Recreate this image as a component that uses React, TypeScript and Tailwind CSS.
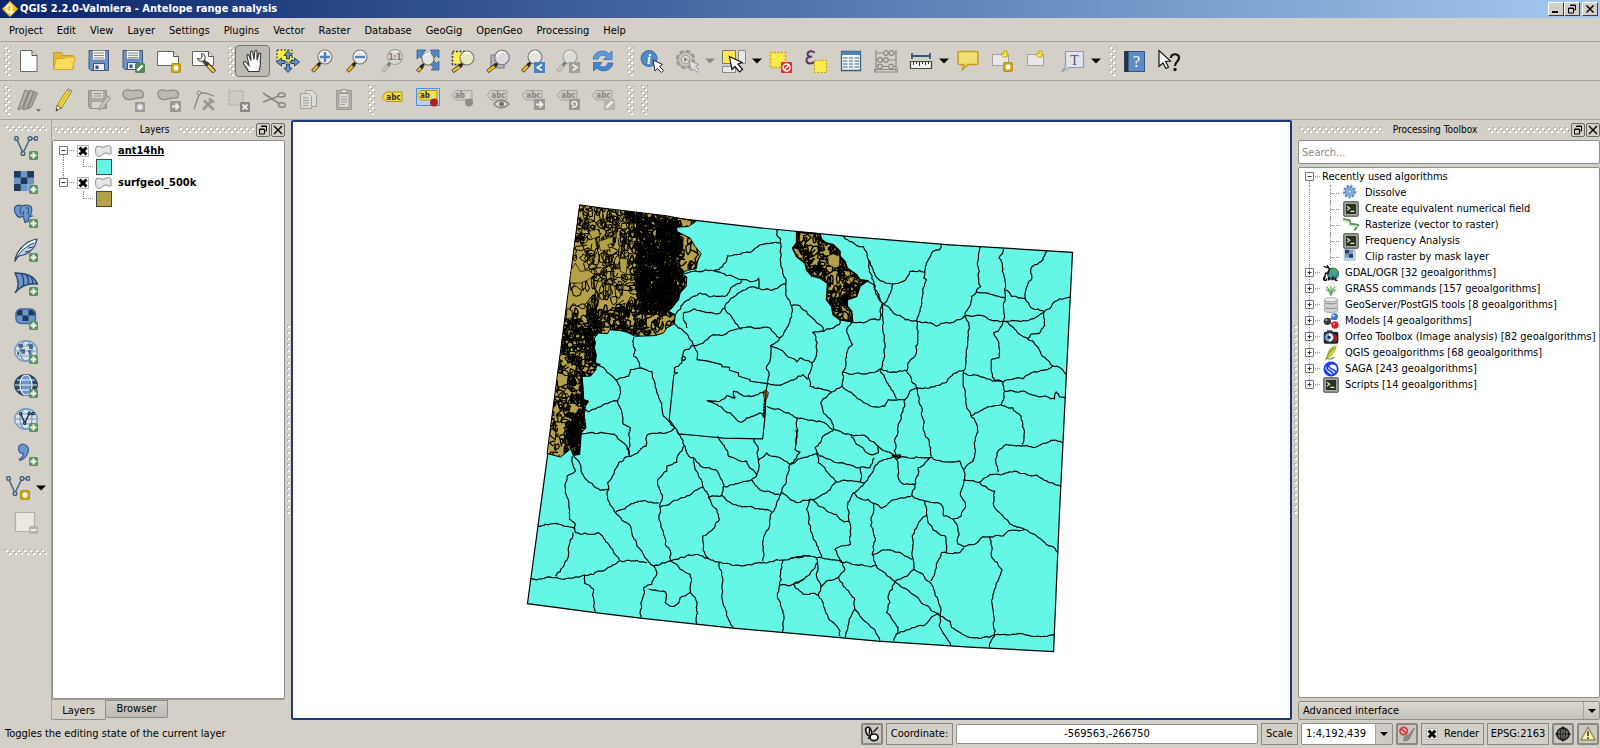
import React from "react";

/* ---------- small helpers ---------- */

type Pt = [number, number];

function makeRandom(seed: number) {
  let s = seed;
  return () => {
    s = (s * 1664525 + 1013904223) % 4294967296;
    return s / 4294967296;
  };
}

function parse(line: string): Pt[] {
  return line
    .trim()
    .split(/\s+/)
    .map((p) => p.split(",").map(Number) as Pt);
}

/* Turns a coarse polyline into a slightly irregular one, like a river or road. */
function roughen(points: Pt[], rnd: () => number): Pt[] {
  const out: Pt[] = [points[0]];
  const split = (a: Pt, b: Pt) => {
    const dx = b[0] - a[0];
    const dy = b[1] - a[1];
    const len = Math.hypot(dx, dy);
    if (len < 9) {
      out.push(b);
      return;
    }
    const k = ((rnd() - 0.5) * Math.min(0.3 * len, 8)) / len;
    const m: Pt = [(a[0] + b[0]) / 2 - dy * k, (a[1] + b[1]) / 2 + dx * k];
    split(a, m);
    split(m, b);
  };
  for (let i = 1; i < points.length; i++) split(points[i - 1], points[i]);
  return out;
}

const toPath = (pts: Pt[]) => "M" + pts.map((p) => `${p[0].toFixed(1)} ${p[1].toFixed(1)}`).join("L");

function linesPath(lines: string[], seed: number) {
  const rnd = makeRandom(seed);
  return lines.map((l) => toPath(roughen(parse(l), rnd))).join("");
}

/* Random contour loops that fill a box. */
function contours(x: number, y: number, w: number, h: number, n: number, size: number, seed: number) {
  const rnd = makeRandom(seed);
  let d = "";
  for (let i = 0; i < n; i++) {
    const cx = x + rnd() * w;
    const cy = y + rnd() * h;
    const steps = 6 + Math.floor(rnd() * 5);
    const rx = size * (0.3 + rnd());
    const ry = size * (0.4 + rnd() * 1.3);
    const pts: Pt[] = [];
    for (let k = 0; k < steps; k++) {
      const a = (k / steps) * Math.PI * 2;
      const r = 0.5 + rnd() * 0.7;
      pts.push([cx + Math.cos(a) * rx * r, cy + Math.sin(a) * ry * r]);
    }
    d += toPath(pts) + (rnd() > 0.5 ? "Z" : "");
  }
  return d;
}

/* ---------- map data: four tiles, three units per pixel ---------- */

const NORTH_WEST = [
  "770,90 770,105 782,118 780,155 786,205 790,225 798,250 802,295 815,320 815,350 800,385 780,415 752,438 750,480 740,500 747,520 742,550",
  "487,222 540,215 580,213 608,200 622,168 650,165 690,158 735,132 780,129",
  "580,213 620,228 660,240 710,242 716,236 716,265",
  "465,345 490,310 520,290 540,280 570,292 615,290 630,270 665,243",
  "716,265 690,262 650,285 620,310 614,325 600,340 560,338 520,328 492,338 490,360 500,385",
  "614,325 640,360 665,390",
  "716,265 755,272 798,252",
  "463,372 490,395 520,437 530,455 530,480",
  "520,437 550,430 580,405 620,402 650,388 680,382 750,385 780,415",
  "520,437 490,455 485,490 475,500 462,505 462,518 472,520 462,525",
  "340,412 345,450 340,470 358,490 360,505 395,515 400,540 410,580 425,625 430,650 465,685",
  "228,490 255,510 285,540 300,535 325,530 330,510 360,505",
  "285,540 300,565 293,600 305,640 310,675 330,685 328,770",
  "192,630 205,637 250,615 293,603",
  "183,703 250,700 290,710 320,740 328,770",
  "465,685 440,700 383,705 378,740 350,762 328,772",
  "465,685 475,703",
  "560,603 600,605 620,588 645,595 640,575 680,590 735,580",
  "560,603 590,615 615,635 640,650 665,668 680,655 700,650 720,640 733,655",
  "484,476 488,470 494,472 496,478 491,483 486,480 484,476",
];
const NORTH_WEST_STRAIGHT = "M461 525L447 660L465 685M475 703L560 711L610 716L728 718L735 650L738 575L742 552M530 480L560 484L605 495V501L628 503V512L655 520L656 530L690 540V545L742 552";

const NORTH_EAST = [
  "95,318 120,318 140,335 165,362 190,385 192,395 158,398 172,430 170,460 155,490 145,535 150,560 215,578",
  "192,395 238,375 240,360",
  "32,438 60,450 85,472 110,487 120,475 155,490",
  "20,552 60,558 100,542 130,525 143,540",
  "278,365 262,385 278,435 262,455 258,490 247,520 247,560 215,578 182,610 190,640 215,665 222,690",
  "278,368 310,370 330,360 360,360 368,310 345,270 342,255 320,245",
  "250,108 285,133 310,140 330,185 345,225 370,245 400,252 430,245 450,215 480,212 497,218",
  "325,180 335,225 345,270 372,312 400,340 450,362 480,366 505,370 530,380 560,368 600,360 612,350",
  "400,252 392,280 372,312",
  "545,133 540,150 515,160 500,190 492,235 500,240 488,290 478,340 475,400 468,440 465,470 445,490 440,515 455,545 470,563",
  "368,312 370,400 367,500 360,512",
  "247,517 320,523 360,508 400,517 440,512",
  "247,560 300,600 350,622 375,620 385,600 435,600 450,575 470,563",
  "360,512 380,545 400,575 410,598",
  "470,563 520,562 560,548 590,520 612,512",
  "612,350 628,370 625,420 620,470 613,512 610,560 620,620 633,648 650,672 645,740 640,785",
  "662,140 655,200 663,260 650,275 635,290 630,320 615,345",
  "650,275 690,283 737,295",
  "732,148 718,175 728,200 738,260 737,295 732,360 715,395 702,400 718,430 718,475 695,480 697,520 705,543 730,547",
  "862,155 850,180 818,200 815,240 800,265 797,298",
  "738,270 755,290 797,298 815,325 855,335 900,297 932,292",
  "612,350 680,353 735,365 800,364 830,352 855,335",
  "855,335 855,378 838,402 815,403 805,418",
  "735,365 805,418 878,498 905,507 920,525",
  "613,520 660,530 705,545 730,547 790,537 878,500",
  "730,547 735,575 800,578 840,592 885,598 890,577 900,592 917,595",
  "735,575 725,615 700,620 660,635 633,648",
  "725,618 760,625 785,650 793,690 787,735",
  "20,620 60,630 110,655 180,665 222,690 270,705 320,712 360,745 405,770",
  "435,600 430,635 413,690 409,740 407,770",
  "470,563 478,610 490,660 495,700 513,745 515,770",
  "110,655 108,735",
];

const SOUTH_WEST = [
  "470,5 490,45 505,80 520,85 525,120 548,172 565,205 590,240 598,270 585,290 548,320 550,355 565,388",
  "490,50 475,75 470,98 440,110 440,125 412,160 425,195 418,230 422,285 435,345 452,370 452,395",
  "420,233 480,207 548,172",
  "520,85 550,115 585,120 608,160 605,198 565,205",
  "608,172 660,160 695,150 710,138 680,95 625,80 605,40 592,20",
  "695,150 730,185 778,195",
  "700,28 715,60 715,100 710,138",
  "715,95 740,70 780,85 810,105 800,140 782,195 755,250 745,300 730,330 728,395",
  "605,198 655,230 700,235 755,247",
  "155,80 165,125 140,140 135,190 145,215 147,270 165,285 165,310",
  "160,80 180,105 190,140 240,183 265,180 262,160 295,100 328,80",
  "265,180 262,210 285,250 330,290 350,350 385,398 400,410",
  "285,250 340,222 375,214 415,222",
  "52,290 100,283 165,298",
  "165,310 180,315 235,310 265,345 280,370 297,392",
  "158,310 145,370 130,410 105,440",
  "32,448 95,445 150,447 220,435 297,395 380,400",
  "193,437 193,462 220,480 225,548",
  "400,410 410,430 395,465 370,475 362,520 362,565",
  "385,480 435,488 435,520 455,532 475,522 480,505 510,490 510,435 480,420 452,395",
  "510,490 525,505 530,583",
  "400,410 452,395 490,385 530,375 565,388 620,402 680,407 730,400 810,388 870,380",
  "597,400 608,450 605,500 620,550 640,594",
  "788,395 778,470 772,500 792,570 788,608",
  "778,470 820,465 850,450",
];

const SOUTH_EAST = [
  "17,0 15,60 30,68 0,105",
  "0,105 40,85 80,72 85,100 130,145 140,158",
  "132,3 100,20 75,55 90,80 140,100 208,115 240,115 253,85",
  "182,15 200,45 240,75 265,70 265,50",
  "318,80 270,95 250,125 225,160 190,190",
  "210,115 215,135 210,158",
  "140,158 175,155 225,160",
  "60,210 110,190 140,158",
  "-30,190 0,210 20,220 60,210 50,240 65,310 95,383",
  "60,210 110,245 140,255 150,270 180,278",
  "190,190 172,230 182,290 182,345 135,360 158,400",
  "190,190 205,205 235,210 255,222 275,237 320,210 365,200",
  "253,222 243,290 257,330 247,375 262,410",
  "318,88 330,155 345,165 375,165",
  "318,80 380,82 425,83 385,115 378,160 365,195",
  "425,83 440,93 510,95 522,120",
  "550,90 550,95 522,120 520,170 512,190 528,232 515,260 490,270 505,300 505,345 525,352 555,345 580,322 640,320 665,303 705,300 760,335 805,370",
  "365,195 405,215 455,225 462,260 490,270",
  "405,215 410,250 415,280 430,302 468,322 468,368",
  "410,258 385,285 367,320 367,380 372,420",
  "247,375 290,362 330,370 367,390",
  "522,355 510,370 455,370 440,410 422,455",
  "520,152 570,158 615,185 615,235 640,260 660,283 705,300",
  "570,158 600,135 685,128 740,137 780,160 815,170",
  "625,128 617,90 625,65 650,45 750,48 785,32 820,40",
  "0,388 60,380 158,400 200,407 258,408 315,458 350,480 400,525 445,553",
  "80,385 80,430 92,475 85,495 105,540 130,580 150,605 150,622",
  "80,400 60,435 10,465 40,495 85,498",
  "92,475 110,455 145,445 165,420 158,400",
  "145,445 195,510 195,540 240,590 270,635",
  "195,540 178,570 165,625",
  "372,420 340,445 315,458 295,500 300,520 290,550 325,595 312,635",
  "316,618 350,602 400,590 445,553",
  "372,420 400,435 425,465 450,530 448,590 483,650",
  "445,553 480,575 485,595 540,625 600,625 680,615 770,622 795,615",
  "600,322 605,380 637,422 610,500 615,620 600,655",
];

const GEOLOGY_WEST =
  "M178 15L250 25L350 37L440 48L527 65L505 80L470 82L470 95L490 105L510 115L525 140L543 162L532 185L528 207L500 212L485 222L500 232L498 260L480 280L475 300L455 325L445 335L465 345L463 372L440 385L430 400L405 408L345 410L320 398L300 393L268 390L262 402L235 400L222 415L225 430L222 445L228 465L225 490L240 495L228 500L226 512L210 530L185 530L188 560L190 600L205 605L195 620L192 650L197 685L183 700L178 765L158 768L152 748L120 773L80 762Z";
const GEOLOGY_EAST =
  "M110 97L180 103L185 120L200 130L220 135L240 155L240 170L255 185L262 205L290 225L300 240L322 243L300 260L290 290L262 300L262 320L275 335L278 367L255 362L240 360L220 345L215 320L200 300L203 250L180 235L155 228L140 210L135 190L110 170L98 145L110 130Z";

function MapDrawing() {
  const ink = { fill: "none", stroke: "#000", strokeLinejoin: "round" as const };
  return (
    <svg className="block h-full w-full" viewBox="293 122 997 597" role="img" aria-label="Map of hunt areas over surface geology">
      <defs>
        <clipPath id="geoWest"><path d={GEOLOGY_WEST} /></clipPath>
        <clipPath id="geoEast"><path d={GEOLOGY_EAST} /></clipPath>
      </defs>
      <path
        d="M579.5 206L665 217L760 228L853 237L950 245L1073 252.500L1067 372L1060 512L1054 652.500L970 648L878 642L790 634L733 629L640 619L595 613.500L527 604.500L547 457L563 335Z"
        fill="#66f6e6" stroke="#000" strokeWidth="1.200"
      />
      <g transform="translate(520 200) scale(.33333)">
        <path d={GEOLOGY_WEST} fill="#b5a14a" stroke="#000" strokeWidth="3" />
        <g clipPath="url(#geoWest)" {...ink}>
          <path strokeWidth="3" d={contours(140, 10, 200, 330, 135, 17, 11)} />
          <path strokeWidth="3.500" d={contours(75, 600, 75, 180, 42, 12, 23)} />
          <path strokeWidth="3.500" d={contours(90, 330, 150, 290, 170, 12, 29)} />
          <path strokeWidth="3.500" d={contours(160, 20, 180, 110, 55, 11, 31)} />
          <path strokeWidth="4" d={contours(325, 35, 230, 380, 300, 13, 47)} />
          <path strokeWidth="5" d={contours(355, 60, 125, 280, 260, 13, 58)} />
          <path strokeWidth="4" d={contours(130, 360, 100, 120, 55, 11, 63)} />
          <path strokeWidth="5" d={contours(145, 540, 50, 240, 85, 11, 71)} />
          <path strokeWidth="4" d={contours(200, 320, 150, 80, 60, 11, 77)} />
          <path fill="#b5a14a" strokeWidth="2" d="M152 210L165 190L180 215L205 212L222 225L205 240L180 250L148 250ZM235 125L278 110V130L262 135L270 150L240 152ZM298 175L322 178L318 222L300 215ZM205 95L232 88L240 108L215 118ZM140 325L155 335L155 355L138 358Z" />
        </g>
        <path d="M727 577L738 572L745 580L742 592L734 605L730 580Z" fill="#b5903c" stroke="#000" strokeWidth="2.500" />
        <path d="M735 600L731 655" stroke="#000" strokeWidth="7" strokeDasharray="9 2 6 1" />
        <path {...ink} strokeWidth="3.500" d={linesPath(NORTH_WEST, 5)} />
        <path {...ink} strokeWidth="3.500" d={NORTH_WEST_STRAIGHT} />
      </g>
      <g transform="translate(760 200) scale(.33333)">
        <path d={GEOLOGY_EAST} fill="#b5a14a" stroke="#000" strokeWidth="5" />
        <g clipPath="url(#geoEast)" {...ink}>
          <path strokeWidth="4" d={contours(95, 95, 230, 275, 330, 11, 83)} />
          <path fill="#b5a14a" strokeWidth="2" d="M204 168L220 162L240 170L238 200L225 205L205 195ZM265 235L285 230L275 250Z" />
        </g>
        <path {...ink} strokeWidth="3.500" d={linesPath(NORTH_EAST, 8)} />
        <path d="M396 768L422 766L424 772L410 780Z" fill="#6b4a1c" stroke="#000" strokeWidth="3" />
      </g>
      <g transform="translate(520 430) scale(.33333)">
        <path {...ink} strokeWidth="3.500" d={linesPath(SOUTH_WEST, 13)} />
      </g>
      <g transform="translate(790 430) scale(.33333)">
        <path {...ink} strokeWidth="3.500" d={linesPath(SOUTH_EAST, 21)} />
      </g>
    </svg>
  );
}

/* ---------- icons, drawn on a 24 × 24 grid ---------- */

function Svg({ children, size = "size-6" }: { children: React.ReactNode; size?: string }) {
  return (
    <svg viewBox="0 0 24 24" className={`${size} block shrink-0`} fill="none" aria-hidden="true">
      {children}
    </svg>
  );
}

const Star = ({ x, y }: { x: number; y: number }) => (
  <g transform={`translate(${x} ${y})`}>
    <rect x=".5" y=".5" width="9" height="9" rx="1.500" fill="#c9a20c" stroke="#b8930a" />
    <path d="M5 1.800v6.400M1.800 5h6.400M2.800 2.800l4.400 4.400M7.200 2.800L2.800 7.200" stroke="#fff" strokeWidth="1.200" />
  </g>
);
const Plus = () => (
  <g>
    <rect x="15" y="15" width="9" height="9" rx="1.500" fill="#5b9459" />
    <path d="M19.500 16.500v6M16.500 19.500h6" stroke="#fff" strokeWidth="2" />
  </g>
);
const Lens = ({ cx = 14, cy = 8, r = 7, grey = false, fill = "#e4e4e0" }: { cx?: number; cy?: number; r?: number; grey?: boolean; fill?: string }) => (
  <g opacity={grey ? 0.55 : 1}>
    <path d={`M1.500 22.500L${cx - 5.5} ${cy + 7}`} stroke={grey ? "#7c7a76" : "#4a3d14"} strokeWidth="4" />
    <path d={`M2 22L${cx - 7.5} ${cy + 9}`} stroke={grey ? "#c4c2bc" : "#f2c230"} strokeWidth="2.400" />
    <path d={`M${cx - 7} ${cy + 8}L${cx - 4} ${cy + 5}`} stroke="#222" strokeWidth="2.500" />
    <circle cx={cx} cy={cy} r={r} fill={fill} stroke="#777" strokeWidth="1.100" />
    <path d={`M${cx - 5} ${cy - 1}a5 5 0 0 1 8-3.500`} stroke="#fff" strokeWidth="1.500" />
  </g>
);
const Cursor = ({ x, y, grey = false }: { x: number; y: number; grey?: boolean }) => (
  <path
    transform={`translate(${x} ${y})`}
    d="M0 0l2 11 2.400-2.400L8.500 12.500l2-2-4-4L9.500 4.500z"
    fill={grey ? "#ddd" : "#fff"} stroke={grey ? "#8f8d88" : "#222"} strokeWidth="1"
  />
);

const icons: Record<string, React.ReactNode> = {
  new: <><path d="M3.500 1.500h11.500l5 5v16H3.500z" fill="#fff" stroke="#666" /><path d="M15 1.500v5h5" fill="#ddd" stroke="#555" /></>,
  open: <><path d="M1.500 20.500V3.500h8l1.500 3h10v14z" fill="#e2b93a" stroke="#c79a1c" /><path d="M1.500 20.500L4.500 9.500h8l1-1.500h9.500l-2.500 12.500z" fill="#fddc5c" stroke="#d1a52a" /></>,
  save: <><path d="M2 1.500h19.500v20H4L2 19.500z" fill="#6a94c8" stroke="#38587f" /><path d="M5.500 1.500h13V11h-13z" fill="#f4f4f2" stroke="#666" strokeWidth=".6" /><path d="M7 4h10M7 6.500h10M7 9h10" stroke="#888" /><path d="M6.500 14.500h11v7h-11z" fill="#ececea" stroke="#38587f" /><path d="M8.500 16.500h3v3.500h-3z" fill="#38587f" /></>,
  saveas: <><path d="M1 1.500h19.500v19H3L1 18.500z" fill="#6a94c8" stroke="#38587f" /><path d="M4.500 1.500h13V10h-13z" fill="#f4f4f2" stroke="#666" strokeWidth=".6" /><path d="M6 4h10M6 6.300h10M6 8.600h10" stroke="#888" /><path d="M5.500 13.500h11v7h-11z" fill="#ececea" stroke="#38587f" /><path d="M7.500 15.500h3v3.500h-3z" fill="#38587f" /><rect x="13" y="14" width="10" height="10" rx="1.500" fill="#4f8a55" /><path d="M15.500 21.500l5-5" stroke="#fff" strokeWidth="2.400" /></>,
  composer: <><path d="M.5 2.500h16l5 5v9H.5z" fill="#fff" stroke="#666" /><path d="M16.500 2.500v5h5" fill="#ddd" stroke="#555" /><Star x={14} y={14} /></>,
  manager: <><path d="M.5 2.500h16l5 5v9H.5z" fill="#fff" stroke="#666" /><path d="M16.500 2.500v5h5" fill="#ddd" stroke="#555" /><path d="M10 10l4 4.500" stroke="#444" strokeWidth="3.500" /><path d="M14 14l8.500 9" stroke="#4a3d14" strokeWidth="4.500" /><path d="M16 16.500l6 6" stroke="#f5cc50" strokeWidth="2.500" /><path d="M9.500 4.500a4 4 0 1 1-4 5l3 .5 1.500-2z" fill="#eee" stroke="#444" /></>,
  hand: <path d="M6 22c-1-3-4.500-6-5-8.500-.3-1.500 1.500-2 2.500-.8L6.500 16 4.500 6.500C4.300 5 6 4.500 6.500 6L8.500 11 8 3c0-1.800 2-1.800 2.300 0L11.500 10l.8-8c.2-1.700 2.200-1.500 2.200.2L14.500 10.500 16.300 4.500c.5-1.500 2.300-1 2 .7C17 11 18.500 14 17.500 17.500L16.500 22z" fill="#fff" stroke="#333" strokeWidth="1.100" transform="translate(1.500 .5)" />,
  pan: <><path d="M1 1h15v12H1z" fill="#fdeb3d" stroke="#222" strokeDasharray="2 1.500" /><path d="M12 1.500l4 5h-2.500v3.500h-3V6.500H8zM12 23.500l-4-4.500h2.500V15h3v4H16zM.5 13l5-4v2.500H9v3H5.500V17zM23.500 13l-5-4v2.500H15v3h3.500V17z" fill="#5e93d4" stroke="#24466e" /></>,
  zoomin: <><Lens fill="#eceae4" /><path d="M14 3v10M9 8h10" stroke="#4a82bf" strokeWidth="2.300" /></>,
  zoomout: <><Lens fill="#eceae4" /><path d="M9 8h10" stroke="#4a82bf" strokeWidth="2.300" /></>,
  zoom1: <><Lens grey fill="#ddd" r={7.5} /><text x="14" y="11" fontSize="8" fontWeight="bold" textAnchor="middle" fill="#77756f" fontFamily="DejaVu Sans Condensed, sans-serif">1:1</text></>,
  zoomfull: <><path d="M3 1h7l-2.500 2.500 4 4-4 4-4-4L1 10V1zM23 1v8l-2.500-2.500L17 10l-4-4 3-3L14 1zM23 21h-8l2.500-2.500-4-4 3.500-4 3.500 4L23 12z" fill="#4f87c5" stroke="#355f90" strokeWidth=".8" /><Lens cx={12} cy={10} r={6} /></>,
  zoomsel: <><path d="M1.500 2.500h13v13h-13z" fill="#fdee55" stroke="#333" strokeWidth="1.500" strokeDasharray="2 1.500" /><Lens cx={16} cy={9} r={7} fill="#e9e7c0" /></>,
  zoomlayer: <><path d="M5 6h13v13H5z" fill="#b8afc3" stroke="#84788f" strokeWidth="1.200" /><Lens cx={16} cy={8.5} r={7.3} fill="#dcd8de" /></>,
  zoomlast: <><Lens cx={14} cy={8} r={7} /><rect x="13" y="13" width="11" height="11" fill="#4a82bf" /><path d="M21 15.500l-4.500 3 4.500 3" stroke="#fff" strokeWidth="1.800" /></>,
  zoomnext: <><Lens grey cx={14} cy={8} r={7} /><rect x="13" y="13" width="11" height="11" fill="#a19f9a" /><path d="M16.500 15.500l4.500 3-4.500 3" stroke="#eee" strokeWidth="1.800" /></>,
  refresh: <><path d="M2 10C3 4 9 1 14 2.500c2 .6 3 1.500 4 2.500l3-3v8.500h-8.500l3-2.800c-3-3-7-1.700-8.500 2.300z" fill="#5d9bdd" stroke="#2f6cae" strokeWidth=".8" /><path d="M22 14c-1 6-7 9-12 7.500-2-.6-3-1.500-4-2.500l-3.500 3v-8.500H11l-2.500 2.800c3 3 7 1.700 8.500-2.300z" fill="#4384cb" stroke="#2f6cae" strokeWidth=".8" /></>,
  identify: <><circle cx="9" cy="9.500" r="8" fill="#4f8ac8" stroke="#356ba5" /><text x="9" y="14.500" fontSize="14" fontStyle="italic" fontWeight="bold" textAnchor="middle" fill="#fff" fontFamily="Liberation Serif, serif">i</text><Cursor x={13} y={11} /></>,
  action: <><circle cx="10.500" cy="10.500" r="8.500" stroke="#99978f" strokeWidth="2.500" strokeDasharray="4.500 2.200" /><circle cx="10.500" cy="10.500" r="7.300" fill="#cbc8c0" stroke="#a19f99" strokeWidth="1.300" /><circle cx="10.500" cy="10.500" r="4.200" fill="#dedcd6" stroke="#99978f" /><path d="M9 8l4 2.500L9 13z" fill="#8a8882" /><Cursor x={14} y={11} grey /></>,
  select: <><path d="M.5 1.500h13v13H.5z" fill="#fde94b" stroke="#777" /><path d="M16.500 1.500h7v13h-7zM.5 17.500h13v6H.5z" fill="#e8e8ea" stroke="#888" /><path d="M7.500 7.500l2.500 13 3-3 4.500 5.500 3-2.500-4.500-5.500 4-1.500z" fill="#fff" stroke="#111" strokeWidth="1.200" /></>,
  deselect: <><path d="M1.500 3.500h15v15h-15z" fill="#fde94b" stroke="#c9a20c" strokeWidth="1.400" strokeDasharray="2 1.500" /><rect x="12" y="13" width="11" height="11" rx="1" fill="#dd2f2f" /><circle cx="17.500" cy="18.500" r="3.500" stroke="#fff" strokeWidth="1.500" /><path d="M15.200 21l4.700-5" stroke="#fff" strokeWidth="1.500" /></>,
  expression: <><path d="M10.500 4C9.500 1.300 4 1.500 3.500 4.800 3.300 7 5.500 8 8 7.800 4.500 7.500 2 9 2.500 11.800c.5 3.500 6 3.500 8.500.7" stroke="#5f3567" strokeWidth="2" /><path d="M10.500 11.500h12v12h-12z" fill="#fde94b" stroke="#c9a20c" strokeWidth="1.200" strokeDasharray="2 1.500" /></>,
  table: <><path d="M2.500 2.500h19v19h-19z" fill="#f6f8fa" stroke="#34617f" strokeWidth="1.300" /><path d="M2.500 2.500h19v3.500h-19z" fill="#4d86b6" /><path d="M4 9h4.500M10 9h4M15.500 9H20M4 12h4.500M10 12h4M15.500 12H20M4 15h4.500M10 15h4M15.500 15H20M4 18h4.500M10 18h4M15.500 18H20" stroke="#34617f" strokeWidth="1.200" /></>,
  abacus: <g stroke="#8b8982" strokeWidth="1.200"><path d="M2 1v21M22 1v21M.5 20.500h23v2.500H.5zM2 4h20M2 11h20M2 17.500h20" /><g fill="#d4d0c8"><circle cx="12" cy="4" r="2.300" /><circle cx="17.500" cy="4" r="2.300" /><circle cx="6" cy="11" r="2.300" /><circle cx="12" cy="11" r="2.300" /><circle cx="6" cy="17.500" r="2.300" /><circle cx="17" cy="17.500" r="2.300" /></g></g>,
  measure: <><path d="M3 7h18M3 4v6M21 4v6" stroke="#33597a" strokeWidth="1.800" /><path d="M1.500 12.500h21v7h-21z" fill="#f0f0ee" stroke="#444" strokeWidth="1.200" /><path d="M4.500 13v3M7.500 13v2M10.500 13v4M13.500 13v2M16.500 13v3M19.500 13v2" stroke="#333" /></>,
  tip: <path d="M4 2.500h16a2 2 0 0 1 2 2v9a2 2 0 0 1-2 2h-8l-5.500 5 1.500-5H4a2 2 0 0 1-2-2v-9a2 2 0 0 1 2-2z" fill="#f0df78" stroke="#c49a0e" strokeWidth="1.400" />,
  newbookmark: <><path d="M1.500 5.500h16v11h-16z" fill="#e8e8e6" stroke="#666" strokeDasharray="1 1" /><path d="M10.500 4.500v2l2 1.500h3.500V2h-3v2.500z" fill="#fde94b" stroke="#c9a20c" /><Star x={12} y={13} /></>,
  bookmark: <><path d="M1.500 5.500h16v11h-16z" fill="#e8e8e6" stroke="#666" strokeDasharray="1 1" /><path d="M10.500 4.500v2l2 1.500h3.500V2h-3v2.500z" fill="#fde94b" stroke="#c9a20c" /></>,
  text: <><path d="M4.500 2.500h18v16H8L1 22.500l3.500-5z" fill="#dfe5ee" stroke="#8f99a8" strokeWidth="1.200" /><text x="13.500" y="15.500" fontSize="14" textAnchor="middle" fill="#555" fontFamily="Liberation Serif, serif">T</text></>,
  help: <><path d="M2.500 2.500h20v20h-20z" fill="#5b8cc6" stroke="#33557d" /><path d="M2.500 2h4v21h-4z" fill="#26333f" /><text x="14.500" y="18" fontSize="16" textAnchor="middle" fill="#fff" fontFamily="Liberation Serif, serif">?</text></>,
  whats: <><path d="M2 1.500v16l4-3.500 3 5.500 2.500-1.500L8.500 12.500l5-.5z" fill="#fff" stroke="#111" strokeWidth="1.200" /><path d="M14 9c0-5 8-5 8 0 0 3.500-4 3.500-4 8" stroke="#111" strokeWidth="2.200" /><circle cx="18" cy="20.500" r="1.700" fill="#111" /></>,
  pencils: <><path d="M1 21L8 2l4 1.500L5.500 20 1 22zM6 21L13 2l4 1.500-6 16.500-4.500 2zM10 20L17 3.500l3.500 1.500-6 14-4 2z" fill="#a5a39d" stroke="#86847e" /><path d="M3.500 19L9.500 3.500M8.500 19.500L15 3.500" stroke="#c0beb8" /><path d="M19 21h5l-2.500 3z" fill="#77756f" /></>,
  pencil: <><path d="M5 17.500L15 2l4 2.500L9.500 20z" fill="#f1de45" stroke="#a08a18" /><path d="M5 17.500L4 23l5.500-3z" fill="#efe6c8" stroke="#555" strokeWidth=".8" /><path d="M4.500 20.500L4 23l2-1z" fill="#222" /><path d="M15 2l1-1.200 4 2.400L19 4.500" fill="#ccc" stroke="#777" /><path d="M7 18.500L17 3.500" stroke="#c8ab20" /></>,
  savelayer: <g opacity=".8"><path d="M1.500 2.500h18v18H3l-1.500-2z" fill="#a19f99" stroke="#86847e" /><path d="M5 3h11v7H5zM5 14h10v6H5z" fill="#d9d7d1" /><path d="M6.500 5.500h8M6.500 8h8" stroke="#86847e" /><path d="M12 22l1-4 7.500-10 3 2-7.500 10z" fill="#c6c4be" stroke="#86847e" /></g>,
  addfeat: <><path d="M1 7C0 2 5 1 9 2.500c4 1.300 6-1.500 10 0 4 2 3 8-1 7.500-4-.5-5 1-9 1.500C5 12 2 11 1 7z" fill="#bcb9b2" stroke="#8a8882" strokeWidth="1.200" /><rect x="13" y="14" width="10" height="10" rx="1" fill="#9a9892" /><path d="M18 15.500v7M14.500 19h7M15.500 16.500l5 5M20.500 16.500l-5 5" stroke="#eee" strokeWidth="1.100" /></>,
  movefeat: <><path d="M1 7C0 2 5 1 9 2.500c4 1.300 6-1.500 10 0 4 2 3 8-1 7.500-4-.5-5 1-9 1.500C5 12 2 11 1 7z" fill="#bcb9b2" stroke="#8a8882" strokeWidth="1.200" /><rect x="13" y="13" width="11" height="11" rx="1" fill="#9a9892" /><path d="M15 18.500h6M18.500 15.500l3 3-3 3" stroke="#eee" strokeWidth="1.800" /></>,
  node: <><path d="M2 21L7.500 5.500M7 5h6l9 3" stroke="#86847e" strokeWidth="1.300" /><circle cx="7" cy="5" r="2" fill="#d4d0c8" stroke="#86847e" /><path d="M11 21.500l8-8M14 14.500l8 7.500" stroke="#9a9892" strokeWidth="2.600" /><path d="M17 10.500l5 4M12 12.500l3 3" stroke="#9a9892" strokeWidth="2.600" /></>,
  deletesel: <><path d="M2 3h14v14H2z" fill="#cecbc3" stroke="#a19f99" strokeWidth="1.200" strokeDasharray="2 1.500" /><rect x="13" y="14" width="10" height="10" rx="1" fill="#8a8882" /><path d="M15.500 16.500l5 5M20.500 16.500l-5 5" stroke="#eee" strokeWidth="1.800" /></>,
  cut: <g stroke="#86847e" strokeWidth="1.500"><path d="M1 5l16 10.500M1 14l16-6" /><ellipse cx="19.500" cy="7" rx="3.500" ry="2" /><ellipse cx="20" cy="17" rx="3.500" ry="2.200" /></g>,
  copy: <g fill="#dddbd5" stroke="#a19f99"><path d="M8.500 2.500h7l4 4v12h-11z" /><path d="M3.500 5.500h8l3 3v12h-11z" /><path d="M6 10h5M6 12.500h6M6 15h6M6 17.500h5" /></g>,
  paste: <g fill="#dddbd5" stroke="#9a9892"><path d="M4.500 2.500h15v19h-15z" fill="#b5b2ab" /><path d="M7 5.500h10v14H7z" /><path d="M9 1.500h6v3.500H9z" /><path d="M9 9h6M9 11.500h6M9 14h6M9 16.500h4" /></g>,
};

function LabelIcon({ kind }: { kind: string }) {
  const on = kind === "label" || kind === "pin";
  const short = kind === "pin" || kind === "unpin";
  const top = kind === "label" ? 3.5 : 2;
  return (
    <>
      {kind === "pin" && <path d="M.5.500h23v17H.5z" fill="#bcd0e8" stroke="#4f90d8" />}
      <g transform={`translate(0 ${top})`}>
        <path d="M1 5.500L5 .5h16v9.500H5z" fill={on ? "#f6df3c" : "#cfccc5"} stroke={on ? "#b8930a" : "#a3a19b"} />
        <text x={short ? 9 : 12.5} y="8" fontSize="8" fontWeight="bold" textAnchor="middle" fill={on ? "#333" : "#85837d"} fontFamily="DejaVu Sans Condensed, sans-serif">
          {short ? "ab" : "abc"}
        </text>
      </g>
      {short && <><path d="M17.500 14l-1-8" stroke="#ddd" strokeWidth="2" /><circle cx="18" cy="14.500" r="4" fill={on ? "#b22222" : "#8f8d87"} /></>}
      {kind === "show" && <><path d="M8 16c4-5 10-5 15 0-5 5-11 5-15 0z" fill="#dddbd5" stroke="#86847e" strokeWidth="1.300" /><circle cx="15.500" cy="16" r="2.500" fill="#76746e" /></>}
      {kind === "move" && <><rect x="13" y="11" width="11" height="11" fill="#9a9892" /><path d="M15 16.500h6M18.500 13.500l3 3-3 3" stroke="#eee" strokeWidth="1.800" /></>}
      {kind === "rotate" && <><rect x="13" y="11" width="11" height="11" fill="#9a9892" /><path d="M16 19.500l2-.5c3.500-.5 4-5 .5-5.500-3 0-3.500 3.500-.5 3.500" stroke="#eee" strokeWidth="1.500" /></>}
      {kind === "change" && <><rect x="13" y="11" width="11" height="11" fill="#b5b3ad" /><path d="M15.500 19.500l6-6" stroke="#eee" strokeWidth="2.600" /></>}
    </>
  );
}

const Globe = ({ dark = false }: { dark?: boolean }) => (
  <g stroke={dark ? "#f4f4f4" : "#6d97cb"} strokeWidth="1.200">
    <ellipse cx="12" cy="11" rx="11.300" ry="10.300" fill={dark ? "#274769" : "#dfe2e3"} stroke={dark ? "#274769" : "#6d97cb"} />
    {dark && <path d="M7.500 6h9v10h-9zM12 1l6 5H6zM12 21l6-5H6z" fill="#6d97cb" stroke="none" />}
    <ellipse cx="12" cy="11" rx="6" ry="10" /><path d="M1 11h22M3 6h18M3 16h18" />
  </g>
);
const Nodes = ({ color = "#44637f", small = false }: { color?: string; small?: boolean }) => (
  <g transform={small ? "translate(5 4) scale(.64)" : undefined} stroke={color} strokeWidth={small ? 2 : 1.5} fill="#e4e2dc">
    <path d="M2.500 2.500L9 17 16 2.500h6" fill="none" />
    <circle cx="2.500" cy="2.500" r="1.800" /><circle cx="9" cy="17.500" r="1.800" /><circle cx="16" cy="2.500" r="1.800" /><circle cx="22" cy="2.500" r="1.800" />
  </g>
);

const layerIcons: [string, React.ReactNode][] = [
  ["Add Vector Layer", <><Nodes /><Plus /></>],
  ["Add Raster Layer", <><path d="M0 1h20v20H0z" fill="#6d97cb" /><path d="M0 1h6.700v6.500H0zM13.300 1H20v6.500h-6.700zM6.700 7.500h6.600V14H6.700zM0 14h6.700v7H0z" fill="#22395a" /><path d="M13.300 14H20v7h-6.700z" fill="#8fb0da" /><Plus /></>],
  ["Add PostGIS Layer", <><path d="M1 3c2-2 5-2 7-1 3-1.200 7-1 9 .5 1.500 3 .5 7-1 9l2 .5-3 1-1 4.500-3 1-1.500-5.500-1-1-2 1.500c-3 0-3.500-1.500-4.500-3.500C.5 8 0 5 1 3z" fill="#6d97cb" stroke="#2c5482" strokeWidth="1.200" /><path d="M7 2.500c-1.500 2-1 6 .5 8M12 4c2-1 3 1 2.500 3s-1 2 0 4M9.500 7v4" stroke="#2c5482" strokeWidth="1.100" /><Plus /></>],
  ["Add SpatiaLite Layer", <><path d="M1 23C1 17 9 3 23 1c-1 6-5 12-11 15-3 1.500-6 1.500-8 2.500z" fill="#bcd2ea" stroke="#274769" strokeWidth="1.200" /><path d="M4 17C8 10 15 5 21 3" stroke="#fff" strokeWidth="1.500" /><path d="M1 23C5 14 11 9 20 5M11 14l5-1M14 10l5-1" stroke="#274769" strokeWidth="1" /><Plus /></>],
  ["Add MSSQL Layer", <><path d="M1 1c9 0 19 2 22.500 11-8-1-16 1-22.500 9 5-6 3-14 0-20z" fill="#6d97cb" stroke="#274769" strokeWidth="1.300" /><path d="M7 1.500c3 4 3 9 2 13M12 2.500c3 4 3 7 2 10.500M17 5c2 3 2 5 1.500 7.500" stroke="#274769" strokeWidth="1.300" /><Plus /></>],
  ["Add Oracle Layer", <><rect x="2" y="3" width="19.500" height="14.500" rx="5" fill="#6d97cb" stroke="#3d69a5" strokeWidth="1.500" /><path d="M3 9.500V6.500L5 4h3.500v5.500zM14.500 4H18l2.500 2.500v3h-6zM8.500 9.500h6V15h-6z" fill="#22395a" /><Plus /></>],
  ["Add WMS Layer", <><Globe /><path d="M4 4h5v4H5zM12 4h7v5h-4v-3zM6 9h5v5H8zM14 10h3v5h-2zM3 12h2v3H3z" fill="#34587f" opacity=".8" /><Plus /></>],
  ["Add WCS Layer", <><Globe dark /><Plus /></>],
  ["Add WFS Layer", <><Globe /><Nodes small color="#1c2c40" /><Plus /></>],
  ["Add Delimited Text Layer", <><path d="M4.500 6.500C4.500 3 7.500 1.500 10.500 2.500c4 1.300 5 5 3 9C12 15 9 17.500 6 18.500L5.500 17c2-1 4-3 4-5.500C6.500 12 4.500 9.500 4.500 6.500z" fill="#6d97cb" stroke="#3a6698" strokeWidth="1.300" /><Plus /></>],
];

/* ---------- shared pieces ---------- */

function Grip({ className }: { className: string }) {
  const id = React.useId();
  return (
    <svg className={`block shrink-0 ${className}`} aria-hidden="true">
      <pattern id={id} width="6" height="6" patternUnits="userSpaceOnUse">
        <path d="M0 0h2v2H0zM3 3h2v2H3z" fill="#b1aea6" />
        <path d="M1 1h2v2H1zM4 4h2v2H4z" fill="#fff" />
      </pattern>
      <rect width="100%" height="100%" fill={`url(#${id})`} />
    </svg>
  );
}

const Caret = ({ grey = false }: { grey?: boolean }) => (
  <svg viewBox="0 0 10 5" className="block h-1.5 w-2.5 shrink-0" aria-hidden="true">
    <path d="M0 0h10L5 5z" fill={grey ? "#8a8882" : "#000"} />
  </svg>
);

function Tool({ name, label, arrow, greyArrow, active }: { name: string; label: string; arrow?: boolean; greyArrow?: boolean; active?: boolean }) {
  return (
    <button
      aria-label={label}
      className={`flex h-8 shrink-0 items-center ${arrow ? "w-[47px] gap-1.5 pl-1.5" : "w-[35px] justify-center"} ${
        active ? "rounded-sm border border-[#77756f] bg-[#bdbab3]" : ""
      }`}
    >
      <Svg>{icons[name] ?? <LabelIcon kind={name} />}</Svg>
      {arrow && <Caret grey={greyArrow} />}
    </button>
  );
}

const ToolGrip = () => <Grip className="h-[30px] w-[7px]" />;

const mainTools: [string, string][] = [
  ["new", "New Project"], ["open", "Open Project"], ["save", "Save Project"], ["saveas", "Save Project As"], ["composer", "New Print Composer"], ["manager", "Composer Manager"],
];
const zoomTools: [string, string][] = [
  ["hand", "Pan Map"], ["pan", "Pan Map to Selection"], ["zoomin", "Zoom In"], ["zoomout", "Zoom Out"], ["zoom1", "Zoom to Native Resolution"], ["zoomfull", "Zoom Full"],
  ["zoomsel", "Zoom to Selection"], ["zoomlayer", "Zoom to Layer"], ["zoomlast", "Zoom Last"], ["zoomnext", "Zoom Next"], ["refresh", "Refresh"],
];
const attrTools: [string, string][] = [
  ["identify", "Identify Features"], ["action", "Run Feature Action"], ["select", "Select Features"], ["deselect", "Deselect Features"], ["expression", "Select by Expression"],
  ["table", "Open Attribute Table"], ["abacus", "Field Calculator"], ["measure", "Measure Line"], ["tip", "Map Tips"], ["newbookmark", "New Bookmark"], ["bookmark", "Show Bookmarks"], ["text", "Text Annotation"],
];
const editTools: [string, string][] = [
  ["pencils", "Current Edits"], ["pencil", "Toggle Editing"], ["savelayer", "Save Layer Edits"], ["addfeat", "Add Feature"], ["movefeat", "Move Feature"], ["node", "Node Tool"],
  ["deletesel", "Delete Selected"], ["cut", "Cut Features"], ["copy", "Copy Features"], ["paste", "Paste Features"],
];
const labelTools: [string, string][] = [
  ["label", "Labeling"], ["pin", "Highlight Pinned Labels"], ["unpin", "Pin/Unpin Labels"], ["show", "Show/Hide Labels"], ["move", "Move Label"], ["rotate", "Rotate Label"], ["change", "Change Label"],
];
const withArrow = ["action", "select", "measure", "text"];

function DockTitle({ title }: { title: string }) {
  const box = "flex size-3.5 shrink-0 items-center justify-center rounded-xs border border-[#6b6963]";
  return (
    <div className="flex h-5 shrink-0 items-center gap-px">
      <div className="flex min-w-0 flex-1 items-center gap-2 pl-0.5">
        <Grip className="h-1.5 w-0 flex-1" />
        <h2 className="px-0.5 text-[10px]">{title}</h2>
        <Grip className="h-1.5 w-0 flex-1" />
      </div>
      <button aria-label={`Float ${title}`} className={box}>
        <svg viewBox="0 0 10 10" className="size-2.5" fill="none" stroke="#000"><path d="M3.500 1h5v5h-2M3 1.500h6M1.500 4h5v5h-5zM1 4.500h6" /></svg>
      </button>
      <button aria-label={`Close ${title}`} className={box}>
        <svg viewBox="0 0 10 10" className="size-2.5" stroke="#000" strokeWidth="1.400"><path d="M1 1l8 8M9 1L1 9" /></svg>
      </button>
    </div>
  );
}

/* Tree toggle with the dotted guide lines that leave it. */
const Expander = ({ open, up = false, down = false }: { open: boolean; up?: boolean; down?: boolean }) => (
  <svg viewBox="0 0 15 16" className="block h-4 w-[15px] shrink-0" fill="none" aria-hidden="true">
    <path d="M.5 3.500h8v8h-8z" fill="#fff" stroke="#77756f" />
    <path d={open ? "M2.500 7.500h4" : "M2.500 7.500h4M4.500 5.500v4"} stroke="#333" />
    <path d={`M10 7.500h5${up ? "M4.500 0v3" : ""}${down ? "M4.500 12v4" : ""}`} stroke="#888" strokeDasharray="1 1" />
  </svg>
);

function TickBox({ label, id }: { label: string; id: string }) {
  return (
    <span className="grid size-3 shrink-0">
      <input id={id} type="checkbox" defaultChecked aria-label={label} className="peer col-start-1 row-start-1 size-3 appearance-none border border-[#b9b6ae] bg-white" />
      <svg viewBox="0 0 12 12" className="pointer-events-none invisible col-start-1 row-start-1 size-3 peer-checked:visible" stroke="#000" strokeWidth="3">
        <path d="M2.500 2.500l7 7M9.500 2.500l-7 7" />
      </svg>
    </span>
  );
}

function LayerItem({ name, underline, swatch, last = false }: { name: string; underline?: boolean; swatch: string; last?: boolean }) {
  return (
    <li className="h-8">
      <div className="flex h-4 items-center pl-1.5">
        <Expander open up={last} down={!last} />
        <span className="w-[3px]" />
        <TickBox id={`show-${name}`} label={`Show ${name}`} />
        <svg viewBox="0 0 17 12" className="ml-1.5 h-3 w-[17px] shrink-0" aria-hidden="true">
          <path d="M1 2c3-2 5 1 8 0 3-1.500 6-2 7 0v7c-2 1-4-2-7-.5-2 1-3 3-6 3C1 11 0 7 1 2z" fill="#e4e4e4" stroke="#8a8a8a" />
        </svg>
        <label htmlFor={`show-${name}`} className={`ml-1.5 font-bold ${underline ? "underline" : ""}`}>{name}</label>
      </div>
      <div className="flex h-4 pl-2.5">
        <span className={`w-5 ${last ? "" : "border-l border-dotted border-[#888]"}`} />
        <span className="mb-2 w-2.5 border-b border-l border-dotted border-[#888]" />
        <span className={`ml-[3px] size-4 shrink-0 border border-[#444] ${swatch}`} />
      </div>
    </li>
  );
}

/* ---------- processing toolbox ---------- */

const Terminal = () => (
  <Svg size="size-4"><rect x=".8" y=".8" width="22.400" height="22.400" rx="2" fill="#8a8a86" stroke="#444" /><rect x="3.500" y="3.500" width="17" height="16.500" fill="#26331d" stroke="#ccc" /><path d="M6 8l4 3-4 3M11 15.500h6" stroke="#e4e8e0" strokeWidth="1.800" /></Svg>
);

const recent: [string, React.ReactNode][] = [
  ["Dissolve", <Svg size="size-4"><circle cx="10" cy="10" r="8.500" stroke="#5c8cc6" strokeWidth="3" strokeDasharray="3.500 2.200" /><circle cx="10" cy="10" r="6.500" fill="#8fb4e2" stroke="#5c8cc6" strokeWidth="1.800" /><circle cx="10" cy="10" r="2.500" fill="#dce8f6" stroke="#5c8cc6" strokeWidth="1.500" /></Svg>],
  ["Create equivalent numerical field", <Terminal />],
  ["Rasterize (vector to raster)", <Svg size="size-4"><path d="M0 3l10 2 1 5 12 2-6 8" stroke="#5b945b" strokeWidth="3" /><path d="M0 5l9 3 1 5 12 1" stroke="#bfe0bf" strokeWidth="2" /></Svg>],
  ["Frequency Analysis", <Terminal />],
  ["Clip raster by mask layer", <Svg size="size-4"><path d="M1 0h18v18H1z" fill="#bccfe0" /><path d="M3 1h6v6H3zM9 7h6v6H9z" fill="#27405e" /><path d="M9 1h6v6H9zM3 7h6v6H3z" fill="#7d9cc0" /></Svg>],
];

const providers: [string, React.ReactNode][] = [
  ["GDAL/OGR [32 geoalgorithms]", <><circle cx="15" cy="13" r="8.500" fill="#3b9ab0" stroke="#123" /><path d="M10 9l5 2-2 5 6-2 3-5-5-4z" fill="#4ea861" /><path d="M2 20l2-8 5 1M1 2l9 3-3 8M6 0l3 5" stroke="#111" strokeWidth="2" /><path d="M1 18v5M4 18h-2v5h3v-3M8 18v5M8 18l3 2.500L8 23M13 23l2-5 2 5M19 18v5h3" stroke="#111" strokeWidth="1.800" /></>],
  ["GRASS commands [157 geoalgorithms]", <><path d="M12 1l9 10-9 12L3 11z" fill="#f4f7f2" stroke="#c8cfc4" /><path d="M12 22C11 16 9 12 6 9M12 22c0-7 2-10 6-13M12 22V7M12 21c-1-5-4-7-7-8M12 21c1-5 4-7 7-8" stroke="#5fa65a" strokeWidth="1.600" /></>],
  ["GeoServer/PostGIS tools [8 geoalgorithms]", <g fill="#d2d2d0" stroke="#8a8a88"><path d="M2 17v4c3 3 17 3 20 0v-4zM2 10v5c3 3 17 3 20 0v-5zM2 4v4c3 3 17 3 20 0V4z" /><ellipse cx="12" cy="4" rx="10" ry="3" fill="#eee" /></g>],
  ["Models [4 geoalgorithms]", <><path d="M8 12l9-6M8 13l8 5" stroke="#777" strokeWidth="3" /><circle cx="6.500" cy="12.500" r="5.500" fill="#3c3c3c" /><circle cx="17.500" cy="5.500" r="5" fill="#3a78dc" /><circle cx="18" cy="18" r="5.500" fill="#e02020" /><circle cx="5" cy="10.500" r="1.500" fill="#ccc" /><circle cx="16" cy="4" r="1.500" fill="#fff" /><circle cx="16.500" cy="16.500" r="1.500" fill="#fcc" /></>],
  ["Orfeo Toolbox (Image analysis) [82 geoalgorithms]", <><rect x="1" y="4" width="22" height="18" rx="3" fill="#222" /><circle cx="9" cy="12.500" r="6.500" fill="#8cb3dc" stroke="#355a88" strokeWidth="2" /><path d="M16 7c7 1 7 11 1 13z" fill="#a81e1e" /><path d="M9 6a6.500 6.500 0 0 1 0 13z" fill="#dfe8f2" /><circle cx="9" cy="12.500" r="2.500" fill="#1c2c44" /><path d="M6 2h8v3H6z" fill="#333" /></>],
  ["QGIS geoalgorithms [68 geoalgorithms]", <><path d="M20 1C11 2 7 8 7 19c5-1 11-8 13-18z" fill="#d8d23a" stroke="#8aa02c" /><path d="M4 23C7 14 11 8 17 4M6 20c4 2 8 1 11-2" stroke="#6b9e2e" strokeWidth="1.800" /></>],
  ["SAGA [243 geoalgorithms]", <><circle cx="12" cy="12" r="10" fill="#fff" stroke="#1238ff" strokeWidth="2.600" /><path d="M21 6C12 2 7 5 9 9s11 3 10 9M16 2.500C8 4 4 9 7 12.500s9 3 8 8M3 13c2 5 5 6 9 8M12 2L5 8" stroke="#1238ff" strokeWidth="2.400" /></>],
];

const statusBox = "flex h-[22px] shrink-0 items-center border border-[#8a8882] px-1";
const statusButton = "flex h-[22px] w-[22px] shrink-0 items-center justify-center rounded-xs border-2 border-double border-[#8a8882] bg-[#cac7c0]";
const boxed = "rounded-xs border border-[#8f8d87] bg-white";

export default function App() {
  return (
    <div className="flex h-screen min-h-[560px] w-full flex-col overflow-hidden bg-[#d4d0c8] font-['DejaVu_Sans_Condensed','DejaVu_Sans',sans-serif] text-[11px] leading-4 text-black">
      <header className="flex h-[18px] shrink-0 items-center bg-linear-to-r from-[#0a246a] to-[#a6caf0] pr-0.5 pl-0.5">
        <svg viewBox="0 0 16 16" className="size-4 shrink-0" aria-hidden="true">
          <path d="M8 0l8 8-8 8-8-8z" fill="#f7c21e" />
          <path d="M8.500 3.500C5 3.500 4 6 4.500 8.500S8 12 9.500 10.500M9.500 4v8.500l2-2" stroke="#fff" strokeWidth="1.700" fill="none" />
        </svg>
        <h1 className="ml-0.5 flex-1 font-bold whitespace-nowrap text-white">QGIS 2.2.0-Valmiera - Antelope range analysis</h1>
        {["Minimize", "Restore", "Close"].map((n, i) => (
          <button key={n} aria-label={n} className={`flex h-3.5 w-4 items-center justify-center border border-t-white border-r-[#404040] border-b-[#404040] border-l-white bg-[#d4d0c8] ${i === 2 ? "ml-0.5" : ""}`}>
            <svg viewBox="0 0 10 10" className="size-2.5" fill="none" stroke="#000">
              <path d={["M1 8.500h6M1 7.500h6", "M3.500 1h5v5h-2M3 1.500h6M1.500 4h5v5h-5zM1 4.500h6", "M1.500 1.500l7 7M8.500 1.500l-7 7"][i]} strokeWidth={i === 2 ? 1.5 : 1} />
            </svg>
          </button>
        ))}
      </header>

      <nav className="flex h-[24px] shrink-0 items-end gap-[14px] border-b border-[#a5a29b] pb-0.5 pl-[9px]">
        {["Project", "Edit", "View", "Layer", "Settings", "Plugins", "Vector", "Raster", "Database", "GeoGig", "OpenGeo", "Processing", "Help"].map((m) => (
          <button key={m}>{m}</button>
        ))}
      </nav>

      <div className="flex h-[39px] shrink-0 items-center gap-[7px] border-b border-[#a5a29b] pb-px pl-1">
        <div className="flex items-center"><ToolGrip />{mainTools.map(([n, l]) => <Tool key={n} name={n} label={l} />)}</div>
        <div className="flex items-center"><ToolGrip />{zoomTools.map(([n, l]) => <Tool key={n} name={n} label={l} active={n === "hand"} />)}</div>
        <div className="flex items-center"><ToolGrip />{attrTools.map(([n, l]) => <Tool key={n} name={n} label={l} arrow={withArrow.includes(n)} greyArrow={n === "action"} />)}</div>
        <div className="flex items-center"><ToolGrip /><Tool name="help" label="Help Contents" /><Tool name="whats" label="What's This?" /></div>
      </div>

      <div className="flex h-[39px] shrink-0 items-center gap-[7px] border-b border-[#a5a29b] pb-px pl-1">
        <div className="flex items-center"><ToolGrip />{editTools.map(([n, l]) => <Tool key={n} name={n} label={l} />)}</div>
        <div className="flex items-center"><ToolGrip />{labelTools.map(([n, l]) => <Tool key={n} name={n} label={l} />)}</div>
        <ToolGrip /><ToolGrip />
      </div>

      <main className="flex min-h-0 flex-1">
        <aside className="flex w-[52px] shrink-0 flex-col items-center border-r border-[#a5a29b] pt-[5px]">
          <Grip className="h-1.5 w-[42px]" />
          {layerIcons.map(([label, icon]) => (
            <button key={label} aria-label={label} className="flex h-[34px] w-10 shrink-0 items-center justify-center"><Svg>{icon}</Svg></button>
          ))}
          <button aria-label="New Shapefile Layer" className="flex h-[34px] w-10 shrink-0 items-center gap-1.5"><Svg><Nodes /><Star x={14} y={14} /></Svg><Caret /></button>
          <button aria-label="Remove Layer" className="flex h-[34px] w-10 shrink-0 items-center justify-center">
            <Svg><path d="M1.500 2.500h19v19h-19z" fill="#ebe7e1" stroke="#b0ada6" strokeWidth="1.200" /><rect x="15" y="16" width="9" height="8" rx="1.500" fill="#b5b2ab" /><path d="M16.500 20h6" stroke="#eee" strokeWidth="2" /></Svg>
          </button>
          <Grip className="mt-2.5 h-1.5 w-[42px]" />
        </aside>

        <section className="flex w-[233px] shrink-0 flex-col">
          <DockTitle title="Layers" />
          <ul className="min-h-0 flex-1 overflow-hidden rounded-xs border border-[#8f8d87] bg-white pt-0.5">
            <LayerItem name="ant14hh" underline swatch="bg-[#66f6e6]" />
            <LayerItem name="surfgeol_500k" swatch="bg-[#b5a14a]" last />
          </ul>
          <div role="tablist" className="flex h-[21px] shrink-0 items-start border-t border-[#a5a29b]">
            <button role="tab" aria-selected="true" className="h-5 w-[54px] rounded-b-xs border-r border-b border-[#8f8d87] pt-0.5">Layers</button>
            <button role="tab" aria-selected="false" className="h-[18px] w-[62px] rounded-b-xs border-t border-r border-b border-[#8f8d87] bg-linear-to-b from-[#d0cdc6] to-[#bfbcb4]">Browser</button>
          </div>
        </section>

        <div className="flex w-[6px] shrink-0 items-center justify-center"><Grip className="h-[190px] w-[3px]" /></div>

        <section className="min-w-0 flex-1 rounded-xs border-2 border-[#1c3a7c] bg-white"><MapDrawing /></section>

        <div className="flex w-[6px] shrink-0 items-center justify-center"><Grip className="h-[190px] w-[3px]" /></div>

        <section className="flex w-[302px] shrink-0 flex-col">
          <DockTitle title="Processing Toolbox" />
          <input aria-label="Search" placeholder="Search..." className={`${boxed} h-6 shrink-0 px-[3px] placeholder:text-[#8a8a8a]`} />
          <ul className={`${boxed} mt-[3px] min-h-0 flex-1 overflow-hidden pt-px whitespace-nowrap`}>
            <li>
              <div className="flex h-4 items-center gap-0.5 pl-1.5"><Expander open down />Recently used algorithms</div>
              <ul className="ml-2.5 border-l border-dotted border-[#888] pl-5">
                {recent.map(([name, icon]) => (
                  <li key={name} className="flex h-4 items-center border-l border-dotted border-[#888]">
                    <span className="mr-1 w-2 border-t border-dotted border-[#888]" />{icon}<span className="ml-1.5">{name}</span>
                  </li>
                ))}
              </ul>
            </li>
            {providers.map(([name, icon]) => (
              <li key={name} className="flex h-4 items-center pl-1.5"><Expander open={false} up down /><span className="mr-1.5 ml-[3px]"><Svg size="size-4">{icon}</Svg></span>{name}</li>
            ))}
            <li className="flex h-4 items-center pl-1.5"><Expander open={false} up /><span className="mr-1.5 ml-[3px]"><Terminal /></span>Scripts [14 geoalgorithms]</li>
          </ul>
          <div className="mt-[3px] grid h-[19px] shrink-0 items-center rounded-xs border border-[#8f8d87] bg-linear-to-b from-[#dcd9d2] to-[#c4c1b9]">
            <select aria-label="Interface" className="col-start-1 row-start-1 appearance-none pl-1"><option>Advanced interface</option></select>
            <span className="pointer-events-none col-start-1 row-start-1 flex h-full w-4 items-center justify-center justify-self-end border-l border-[#a5a29b]">
              <svg viewBox="0 0 8 4" className="h-1 w-2"><path d="M0 0h8L4 4z" /></svg>
            </span>
          </div>
        </section>
      </main>

      <footer className="flex h-7 shrink-0 items-center gap-[3px] pr-px pb-px pl-[5px]">
        <p className="flex-1 whitespace-nowrap">Toggles the editing state of the current layer</p>
        <button aria-label="Toggle extents" className={statusButton}>
          <Svg size="size-4"><ellipse cx="7" cy="8" rx="4" ry="6.500" transform="rotate(-20 7 8)" fill="#fff" stroke="#111" strokeWidth="2.500" /><ellipse cx="15" cy="17" rx="6" ry="5" fill="#fff" stroke="#111" strokeWidth="2.500" /><path d="M14 9l7-7M6 19l4-4M8 4v8" stroke="#111" strokeWidth="2" /></Svg>
        </button>
        <label htmlFor="coord" className={`${statusBox} w-[67px] justify-center`}>Coordinate:</label>
        <input id="coord" defaultValue="-569563,-266750" className={`${boxed} h-5 w-[302px] text-center`} />
        <label htmlFor="scale" className={`${statusBox} w-[37px]`}>Scale</label>
        <div className="grid h-[22px] w-[92px] shrink-0 items-center rounded-xs border border-[#8f8d87] bg-[#cfccc5]">
          <select id="scale" className="col-start-1 row-start-1 mr-4 h-full appearance-none border-r border-[#a5a29b] bg-white pl-1"><option>1:4,192,439</option></select>
          <svg viewBox="0 0 8 4" className="pointer-events-none col-start-1 row-start-1 mr-1 h-1 w-2 justify-self-end"><path d="M0 0h8L4 4z" /></svg>
        </div>
        <button aria-label="Stop rendering" className={statusButton}>
          <Svg size="size-4"><path d="M23 3L15 13l-7 3-1 6c6 1 9-2 10-6z" fill="#8f8d87" stroke="#6b6963" /><circle cx="7" cy="7.500" r="5.500" stroke="#d63a3a" strokeWidth="2.500" /><path d="M3 4l8 7" stroke="#d63a3a" strokeWidth="2.500" /></Svg>
        </button>
        <div className={`${statusBox} w-[63px] gap-1.5`}><TickBox id="render" label="Render" /><label htmlFor="render">Render</label></div>
        <div className={`${statusBox} w-[62px] justify-center`}>EPSG:2163</div>
        <button aria-label="CRS status" className={statusButton}>
          <Svg size="size-4"><circle cx="12" cy="12" r="9" fill="#777" stroke="#222" strokeWidth="2.500" /><ellipse cx="12" cy="12" rx="4" ry="9" stroke="#222" strokeWidth="1.800" /><path d="M3 12h18M12 3v18" stroke="#222" strokeWidth="1.500" /><path d="M12 0l3 4H9zM12 24l3-4H9zM0 12l4-3v6zM24 12l-4-3v6z" fill="#111" /></Svg>
        </button>
        <button aria-label="Messages" className={statusButton}>
          <Svg size="size-4"><path d="M12 2l10.500 19h-21z" fill="#fbf5b0" stroke="#8f8a55" strokeWidth="2" /><path d="M12 8v7M12 17v2.500" stroke="#222" strokeWidth="2.200" /></Svg>
        </button>
      </footer>
    </div>
  );
}
